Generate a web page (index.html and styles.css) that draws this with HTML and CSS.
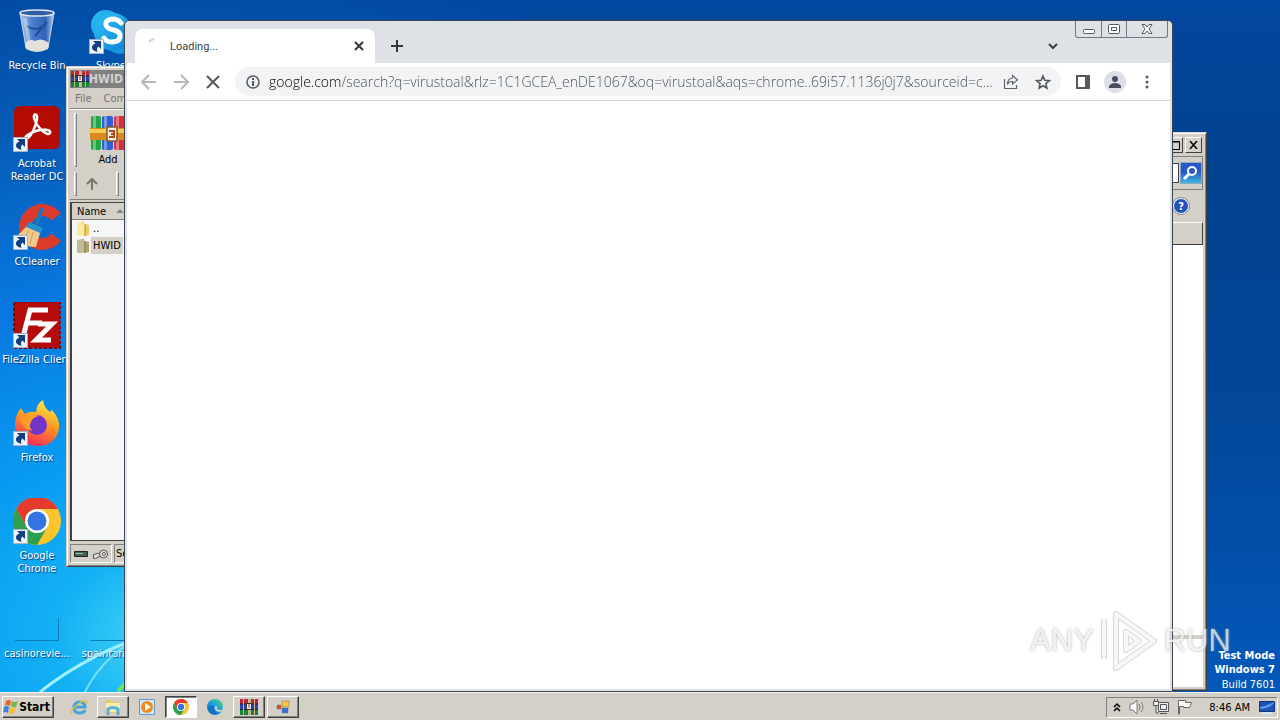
FILE: index.html
```html
<!DOCTYPE html>
<html lang="en">
<head>
<meta charset="utf-8">
<title>Desktop</title>
<link rel="stylesheet" href="styles.css">
</head>
<body>
<svg class="defs" aria-hidden="true">
  <defs>
    <linearGradient id="fire" x1="0.7" y1="0" x2="0.3" y2="1"><stop offset="0" stop-color="#fff04a"/><stop offset=".45" stop-color="#ff9a1f"/><stop offset="1" stop-color="#f5245f"/></linearGradient>
    <linearGradient id="sea" x1="0" y1="1" x2="1" y2="0"><stop offset="0" stop-color="#0b57b8"/><stop offset=".5" stop-color="#1b9de0"/><stop offset="1" stop-color="#5bd66b"/></linearGradient>
    <linearGradient id="glass" x1="0" x2="1"><stop offset="0" stop-color="#a9c4e6"/><stop offset=".35" stop-color="#4a7fd0"/><stop offset=".75" stop-color="#2e62b8"/><stop offset="1" stop-color="#b8cfe9"/></linearGradient>
    <linearGradient id="sky" x1="0" y1="0" x2="1" y2="1"><stop offset="0" stop-color="#2fc3f5"/><stop offset="1" stop-color="#0a7fd6"/></linearGradient>
  </defs>
  <symbol id="shortcut" viewBox="0 0 15 15"><path fill="#eef3f8" stroke="#9fb4c9" d="M.5.5h14v14H.5z"/><path fill="#123f82" d="M4 2h8v8L9.500 7.500Q7 9 8.500 13 2 11 3 7.500 4 5 6.500 4.500z"/></symbol>
  <symbol id="chrome" viewBox="0 0 48 48"><circle cx="24" cy="24" r="24" fill="#fbc52c"/><path fill="#e33b2e" d="M3.200 12A24 24 0 0 1 44.800 12H24L13.600 30z"/><path fill="#2f9e4f" d="M3.200 12A24 24 0 0 0 24 48L34.400 30H13.600z"/><circle cx="24" cy="24" r="12" fill="#fff"/><circle cx="24" cy="24" r="9.500" fill="#3374e0"/></symbol>
  <symbol id="rar" viewBox="0 0 36 36"><rect x="1" y="1" width="10" height="34" rx="2" fill="#24a444"/><rect x="12" y="1" width="11" height="34" rx="2" fill="#2b60d8"/><rect x="24" y="1" width="11" height="34" rx="2" fill="#d72f3c"/><path fill="#fff" opacity=".35" d="M3 1h3v34H3zM14 1h3v34h-3zM26 1h3v34h-3z"/><path fill="#d98a1f" d="M0 13h36v12H0z"/><path fill="#f6ca58" d="M0 14h36v4H0z"/><path fill="#f7eee0" stroke="#80592a" stroke-width="1.500" d="M17 12h10v14H17z"/><path fill="none" stroke="#b4471b" stroke-width="2" d="M19 16h5v6h-5M21 19h3"/></symbol>
  <symbol id="rar-small" viewBox="0 0 18 16"><path fill="#b8283a" d="M0 0h18v5H0z"/><path fill="#2c43b4" d="M0 5h18v5H0z"/><path fill="#17823a" d="M0 10h18v6H0z"/><path stroke="#222" d="M0 5h18M0 10.500h18"/><path fill="#c9b48a" d="M3 0h1v16H3zM14 0h1v16h-1zM8 0h3v16H8z"/><path fill="#eee" stroke="#333" d="M6.500 4.500h5v6h-5z"/><path stroke="#a33" d="M9 5v4"/></symbol>
  <symbol id="folder" viewBox="0 0 16 16"><path fill="#e9c04e" d="M2 2l7-1v14l-7-1z"/><path fill="#fbeaa0" d="M2 2h5l3 1v12H2z"/><path fill="#eccb62" d="M10 3l4 1v10l-4 1z"/><path stroke="#b18d30" fill="none" d="M10 3v12"/></symbol>
</svg>

<main class="desktop">
  <svg class="rays" viewBox="0 0 300 120" aria-hidden="true"><path d="M40 115Q90 75 160 54" stroke="#9ff0fb" stroke-width="3"/><path d="M85 115Q105 75 150 55" stroke="#70dffa" stroke-width="2"/><path d="M118 114l14-14" stroke="#68e66c" stroke-width="4"/></svg>

  <nav class="icons" aria-label="Desktop icons">
    <a class="shortcut" href="#"><svg viewBox="0 0 48 48"><path fill="url(#glass)" stroke="#c4d4e8" d="M7 5l6 35q11 7 22 0l6-35z"/><ellipse cx="24" cy="5" rx="17" ry="3" fill="#2d5da8" stroke="#dfe6ee" stroke-width="1.500"/><path fill="#e3e1dc" d="M12 35q5-5 10-2 7-4 14 2l-1 6q-11 5-22 0z"/><path stroke="#244e98" stroke-width="2" fill="none" d="M14 18q8 6 16 0M34 14L22 28"/><path stroke="#fff" opacity=".35" stroke-width="4" d="M12 10l4 24"/></svg><span>Recycle Bin</span></a>
    <a class="shortcut" href="#"><svg viewBox="0 0 48 48"><rect x="1" y="0" width="46" height="43" rx="6" fill="#b30b00"/><path fill="none" stroke="#fff" stroke-width="2.500" d="M13 33C10 31 17 27 23 25S39 23 37 27 24 22 21 12c-1-5 4-5 3 1s-5 18-11 20z"/><use href="#shortcut" x="0" y="31" width="15" height="15"/></svg><span>Acrobat<br>Reader DC</span></a>
    <a class="shortcut" href="#"><svg viewBox="0 0 48 48"><path fill="none" stroke="#dc3b2c" stroke-width="12" d="M43 13A17 17 0 1 0 43 33"/><path stroke="#1878bd" stroke-width="4" d="M29 4l-6 18"/><path fill="#2791cf" d="M16 18l14 6-3 7-15-7z"/><path fill="#f0c98b" d="M13 23l14 6-4 14-11-1-8-10z"/><path stroke="#d6a058" d="M16 26l-6 11M20 28l-3 12"/><use href="#shortcut" x="0" y="31" width="15" height="15"/></svg><span>CCleaner</span></a>
    <a class="shortcut" href="#"><svg viewBox="0 0 48 48"><rect x="1" y="0" width="46" height="46" fill="#b50b0b" stroke="#7c0707" stroke-width="2" stroke-dasharray="3 2"/><path fill="none" stroke="#fff" stroke-width="5" d="M10 35L17 8h18M14 21h15M25 22h14L23 38h15"/><use href="#shortcut" x="0" y="31" width="15" height="15"/></svg><span class="nowrap">FileZilla Client</span></a>
    <a class="shortcut" href="#"><svg viewBox="0 0 48 48"><path fill="url(#fire)" d="M8 8l4 6q5-3 10-2l1 0q1-9 7-12 1 8 7 12l2-2q8 9 7 18-3 18-22 18Q2 44 2 26 2 15 8 8z"/><circle cx="24" cy="25" r="10" fill="#7136c9"/><path fill="#ff9c25" d="M8 18q10-6 18-2-6 1-8 6-3 6 2 9-12-2-12-13z"/><use href="#shortcut" x="0" y="31" width="15" height="15"/></svg><span>Firefox</span></a>
    <a class="shortcut" href="#"><svg viewBox="0 0 48 48"><use href="#chrome" y="-1" width="48" height="48"/><use href="#shortcut" x="0" y="31" width="15" height="15"/></svg><span>Google<br>Chrome</span></a>
    <a class="shortcut" href="#"><svg viewBox="0 0 48 48"><path fill="none" stroke="#087ab8" d="M2 44.500h43.500V22"/></svg><span class="nowrap">casinorevie...</span></a>
    <a class="shortcut first-row" href="#"><svg viewBox="0 0 48 48"><circle cx="19" cy="17" r="15" fill="url(#sky)"/><circle cx="33" cy="31" r="15" fill="#1597dd"/><circle cx="26" cy="24" r="19" fill="url(#sky)"/><path fill="none" stroke="#fff" stroke-width="5" stroke-linecap="round" d="M34 15q-3-4-9-4-7 1-6 6 1 4 8 5 7 2 6 7-1 5-8 5-6 0-8-4"/><use href="#shortcut" x="2" y="31" width="15" height="15"/></svg><span>Skype</span></a>
    <a class="shortcut last-row" href="#"><svg viewBox="0 0 48 48"><path fill="none" stroke="#087ab8" d="M4 44.500h41.500V22"/></svg><span class="nowrap">spainrang...</span></a>
  </nav>

  <section class="classic archive" aria-label="HWID archive">
    <header class="titlebar"><svg width="18" height="16"><use href="#rar-small"/></svg>HWID</header>
    <div class="menubar"><span>File</span><span>Commands</span></div>
    <div class="tools">
      <i class="grip"></i>
      <button class="tool"><svg width="36" height="36"><use href="#rar"/></svg>Add</button>
    </div>
    <div class="tools path">
      <i class="grip"></i>
      <button class="up" aria-label="Up"><svg width="12" height="12" fill="none" stroke="#77756f" stroke-width="2"><path d="M6 12V2M1 6l5-5 5 5"/></svg></button>
      <i class="grip"></i>
    </div>
    <div class="list">
      <div class="head">Name <svg width="8" height="4"><path fill="#888" d="M0 4l4-4 4 4z"/></svg></div>
      <div class="row"><svg width="16" height="16"><use href="#folder"/></svg><span>..</span></div>
      <div class="row dim"><svg width="16" height="16"><use href="#folder"/></svg><span class="picked">HWID</span></div>
    </div>
    <footer class="status">
      <span class="cell"><svg width="36" height="12"><path fill="#48605a" stroke="#222" d="M1.500 3.500h13v5h-13z"/><path stroke="#8fc4ad" d="M3 5.500h7"/><path fill="#ddd" stroke="#555" d="M20.500 6.500l8-2v3l-6 3h-2z"/><circle cx="30.500" cy="6" r="4" fill="#ddd" stroke="#555"/><circle cx="31" cy="6" r="1.500" fill="#fff" stroke="#555"/></svg></span>
      <span class="cell fill">Selected 1 folder</span>
    </footer>
  </section>

  <section class="classic explorer" aria-label="Explorer window">
    <header class="caption">
      <button class="box" aria-label="Maximize"><svg width="10" height="9" fill="none" stroke="#000"><path d="M.500 1h9M.500.500h9v8h-9z"/></svg></button>
      <button class="box" aria-label="Close"><svg width="9" height="8" stroke="#000" stroke-width="1.500"><path d="M1 0l7 8M8 0L1 8"/></svg></button>
    </header>
    <div class="searchrow"><input class="find" type="text" aria-label="Search"><button class="go" aria-label="Search"><svg width="20" height="20" fill="none" stroke="#fff"><circle cx="11" cy="8" r="4" stroke-width="2"/><path stroke-width="3" d="M8 11l-5 5"/></svg></button></div>
    <div class="helprow"><button class="help" aria-label="Help">?</button></div>
    <div class="band"></div>
    <div class="blank"><i></i></div>
  </section>

  <div class="edition"><b>Test Mode</b><b>Windows 7</b><span>Build 7601</span></div>

  <section class="browser" aria-label="Browser">
    <header class="strip">
      <div class="tab">
        <svg width="16" height="16" fill="none" stroke="#c9cdf0" stroke-width="2"><path d="M3 4q2-2.500 5-3"/></svg>
        <span>Loading...</span>
        <button aria-label="Close tab"><svg width="10" height="10" stroke="#33363a" stroke-width="2"><path d="M1 1l8 8M9 1L1 9"/></svg></button>
      </div>
      <button class="plus" aria-label="New tab"><svg width="12" height="12" stroke="#33363a" stroke-width="2"><path d="M6 0v12M0 6h12"/></svg></button>
      <button class="tabs-menu" aria-label="Search tabs"><svg width="10" height="7" fill="none" stroke="#3c4043" stroke-width="2"><path d="M1 1l4 4 4-4"/></svg></button>
      <div class="controls">
        <button aria-label="Minimize"><svg width="12" height="10" fill="#fff" stroke="#555a63"><rect x=".500" y="5.500" width="11" height="4" rx="1"/></svg></button>
        <button aria-label="Maximize"><svg width="12" height="10" fill="#fff" stroke="#555a63"><rect x=".500" y=".500" width="11" height="9" rx="1"/><path d="M3.500 3.500h5v3h-5z"/></svg></button>
        <button class="wide" aria-label="Close"><svg width="12" height="10"><path fill="#fff" stroke="#555a63" d="M1 .500h3l2 2.500 2-2.500h3L8 5l3 4.500H8L6 7 4 9.500H1L4 5z"/></svg></button>
      </div>
    </header>
    <div class="toolbar">
      <button class="icon" aria-label="Back"><svg width="16" height="16" fill="none" stroke="#b6b8bb" stroke-width="2"><path d="M15 8H2M8 1L1 8l7 7"/></svg></button>
      <button class="icon" aria-label="Forward"><svg width="16" height="16" fill="none" stroke="#b6b8bb" stroke-width="2"><path d="M1 8h13M8 1l7 7-7 7"/></svg></button>
      <button class="icon" aria-label="Stop"><svg width="14" height="14" fill="none" stroke="#55585c" stroke-width="2"><path d="M1 1l12 12M13 1L1 13"/></svg></button>
      <div class="omnibox">
        <svg width="14" height="14" fill="none" stroke="#55585c"><circle cx="7" cy="7" r="6" stroke-width="1.500"/><path stroke-width="2" d="M7 6v5M7 3v2"/></svg>
        <input class="url" type="text" aria-label="Address" value="google.com/search?q=virustoal&amp;rlz=1C1GCEA_enDE1067&amp;oq=virustoal&amp;aqs=chrome..69i57.1136j0j7&amp;sourceid=c...">
        <button class="icon" aria-label="Share"><svg width="16" height="16" fill="none" stroke="#5f6368" stroke-width="1.200"><path d="M1.500 5v9.500h12V11M9.500 1.500l5 4.500-5 4V7.500q-4 0-5 3 0-6 5-6.500z"/></svg></button>
        <button class="icon" aria-label="Bookmark"><svg width="16" height="16" fill="none" stroke="#55585c" stroke-width="1.600"><path d="M8 2l1.800 4.200 4.500.400-3.400 3 1 4.400L8 11.700 4.100 14l1-4.400-3.400-3 4.500-.400z"/></svg></button>
      </div>
      <button class="icon" aria-label="Side panel"><svg width="14" height="14"><path fill="#55585c" fill-rule="evenodd" d="M0 0h14v14H0zM2 2v10h7V2z"/></svg></button>
      <button class="icon" aria-label="Profile"><svg width="22" height="22"><circle cx="11" cy="11" r="11" fill="#dcdfe5"/><circle cx="11" cy="8" r="3" fill="#454d5e"/><path fill="#454d5e" d="M5 17v-2q2-3 6-3t6 3v2z"/></svg></button>
      <button class="icon" aria-label="Menu"><svg width="4" height="14" fill="#55585c"><circle cx="2" cy="2" r="1.500"/><circle cx="2" cy="7" r="1.500"/><circle cx="2" cy="12" r="1.500"/></svg></button>
    </div>
    <div class="page"></div>
  </section>

  <div class="watermark"><span>ANY</span><svg width="58" height="66" fill="none" stroke-linejoin="round"><path stroke="#cfcfcf" stroke-width="6" d="M4 11v40M16 55V6l38 27-38 27v-10M26 24v18l13-9z"/><path stroke="#f6f6f6" stroke-width="4" d="M4 11v40M16 55V6l38 27-38 27v-10M26 24v18l13-9z"/></svg><span>RUN</span></div>
</main>

<footer class="taskbar">
  <button class="start"><svg width="16" height="16"><path fill="#e8642c" d="M3 2q3-2 5 0L7 7q-3-2-5 0z"/><path fill="#7ab648" d="M9 2q3 2 6 0l-2 6q-3 1-5-1z"/><path fill="#4482d6" d="M1 8q3-2 5 0l-1 6q-3-2-5 0z"/><path fill="#f2bf33" d="M7 8q3 2 6 1l-2 5q-3 2-5 0z"/></svg>Start</button>
  <nav class="apps" aria-label="Task buttons">
    <button aria-label="Internet Explorer"><svg width="18" height="18" fill="none"><path stroke="#40a4df" stroke-width="3" d="M5 9h10q0-5-5-5-6 0-6 6 0 5 6 5 4 0 5-3"/><path stroke="#ecc039" stroke-width="1.500" d="M2 16q-3-3 5-9 7-6 10-4 1 1-1 3"/></svg></button>
    <button class="raised" aria-label="File Explorer"><svg width="18" height="18"><path fill="#e7ca67" d="M1 2h6l1 2h8v11H1z"/><path fill="#faedac" d="M2 5h14v9H2z"/><path fill="none" stroke="#56aee0" stroke-width="3" d="M4 17v-6q5-3 10 0v6"/></svg></button>
    <button aria-label="Media Player"><svg width="16" height="16"><path fill="#d3e8f7" stroke="#6399c8" d="M.500.500h15v15H.500z"/><circle cx="8" cy="8" r="6" fill="#f28b1f"/><path fill="#fff" d="M6 4l6 4-6 4z"/></svg></button>
    <button class="pressed" aria-label="Google Chrome"><svg width="16" height="16"><use href="#chrome"/></svg></button>
    <button aria-label="Edge"><svg width="16" height="16"><circle cx="8" cy="8" r="8" fill="url(#sea)"/><path fill="#d4d0c8" d="M8 7q3 0 2 3 3 2 6 0-1 3-4 3-5-1-4-6z"/><path fill="#1470c4" d="M1 9q3-4 6-2-2 6 5 7-7 4-11-5z"/></svg></button>
    <button class="raised" aria-label="WinRAR"><svg width="18" height="16"><use href="#rar-small"/></svg></button>
    <button class="raised" aria-label="Application"><svg width="14" height="14" stroke="#777" stroke-width=".500"><path fill="#e04a2d" d="M1 5h4v4H1z"/><path fill="#f6c83d" d="M6 1h7v6H6z"/><path fill="#3a6fdc" d="M6 8h6v5H6z"/></svg></button>
  </nav>
  <div class="tray">
    <svg width="8" height="11" fill="none" stroke="#000" stroke-width="1.500"><path d="M1 5l3-3 3 3M1 9l3-3 3 3"/></svg>
    <svg width="16" height="16" fill="#fff" stroke="#777"><path d="M1 5h3l4-4v14l-4-4H1z"/><path fill="none" d="M10 5q2 3 0 6M12 3q4 5 0 10"/></svg>
    <svg width="16" height="16" fill="#eee" stroke="#555"><path d="M5.500 3.500h10v9h-10zM7.500 5.500h6v5h-6zM7 14.500h7M.500 2.500h5v4h-5zM1.500 0v3M4.500 0v3M3 7v7h3"/></svg>
    <svg width="16" height="16" fill="#fff" stroke="#666"><path d="M1.500 15V1.500h7v2h6l-2 5h-6v-1h-4V15z"/></svg>
    <time>8:46 AM</time>
    <svg width="16" height="13"><path fill="#1d52b8" stroke="#16346e" d="M.500.500h15v10H.500z"/><path fill="#5e9be8" d="M1 6q7-1 14-5v1q-4 5-14 6z"/><path fill="#d5e5f7" d="M3 11h10v2H3z"/></svg>
  </div>
</footer>
</body>
</html>
```

FILE: styles.css
```css
* { box-sizing: border-box; }
body {
  margin: 0;
  height: 100vh;
  display: flex;
  flex-direction: column;
  overflow: hidden;
  font: 11px/13px "DejaVu Sans Condensed", "DejaVu Sans", sans-serif;
  color: #000;
}
button, input { font: inherit; color: inherit; border: 0; padding: 0; margin: 0; background: none; }
button { display: flex; align-items: center; justify-content: center; }
svg { display: block; flex: none; }
.defs { position: absolute; width: 0; height: 0; }

.desktop {
  position: relative;
  flex: 1;
  overflow: hidden;
  background:
    radial-gradient(ellipse 900px 680px at 180px 640px, #4fdcf2 0, #12b0f5 14%, #089af0 30%, #0878e0 52%, rgba(6, 90, 200, 0) 100%),
    linear-gradient(to bottom, #0247a0 0, #02428e 25%, #02479a 60%, #0258ba 100%);
}
.rays { position: absolute; left: 0; bottom: -5px; width: 300px; height: 120px; fill: none; }
.icons {
  display: grid;
  grid-auto-flow: column;
  grid-template-rows: repeat(7, 98px);
  grid-auto-columns: 72px;
  justify-content: start;
  column-gap: 2px;
  padding: 8px 0 0 1px;
}
.shortcut {
  display: flex;
  flex-direction: column;
  align-items: center;
  gap: 3px;
  color: #fff;
  text-align: center;
  text-decoration: none;
  text-shadow: 1px 1px 1px #003a80;
}
.shortcut svg { width: 48px; height: 48px; }
.nowrap { white-space: nowrap; }
.first-row { grid-row: 1; grid-column: 2; }
.last-row { grid-row: 7; grid-column: 2; }

.classic {
  position: absolute;
  display: flex;
  flex-direction: column;
  background: #d4d0c8;
  border: 1px solid;
  border-color: #d4d0c8 #404040 #404040 #d4d0c8;
  box-shadow: inset 1px 1px #fff, inset -1px -1px #808080;
  padding: 3px;
}
.archive { left: 66px; top: 66px; width: 50%; height: 501px; }
.titlebar { display: flex; align-items: center; height: 18px; padding-left: 1px; background: #808080; color: #d4d0c8; font-weight: bold; font-size: 12px; }
.menubar { display: flex; gap: 12px; padding: 4px 5px; height: 20px; color: #77756f; }
.tools { display: flex; height: 62px; border-top: 1px solid #808080; box-shadow: inset 0 1px #fff; padding: 4px 4px 3px; gap: 13px; }
.tools.path { height: 30px; padding-top: 2px; border-top: 0; border-bottom: 1px solid #808080; box-shadow: none; gap: 9px; }
.grip { width: 3px; border: 1px solid; border-color: #fff #808080 #808080 #fff; }
.tool { flex-direction: column; gap: 2px; }
.up { width: 12px; }
.up + .grip { margin-left: 9px; }
.list { flex: 1; margin-top: 2px; border: 1px solid #404040; border-left-width: 2px; background: #f6f6f6; }
.head { display: flex; align-items: center; gap: 10px; height: 17px; padding-left: 5px; background: #d4d0c8; border-bottom: 1px solid #808080; }
.row { display: flex; align-items: center; height: 17px; padding-left: 3px; }
.row span { padding: 2px; }
.picked { background: #d4d0c8; }
.dim svg { filter: brightness(.8) saturate(.6); }
.status { display: flex; gap: 2px; padding-top: 3px; height: 22px; }
.cell { display: flex; align-items: center; padding: 0 2px; border: 1px solid; border-color: #808080 #fff #fff #808080; }
.fill { flex: 1; padding: 0 1px; }

.explorer { right: 73px; top: 132px; bottom: 1px; width: 55%; }
.caption { display: flex; justify-content: flex-end; gap: 2px; height: 20px; padding: 1px 1px 3px; }
.box { width: 17px; height: 16px; background: #d4d0c8; border: 1px solid; border-color: #fff #404040 #404040 #fff; }
.searchrow { display: flex; height: 34px; padding: 6px 1px; gap: 2px; border: 1px solid #808080; border-left: 0; align-items: stretch; }
.find { flex: 1; background: #fff; border: 1px solid #404040; }
.go { width: 20px; background: linear-gradient(#2858c8 45%, #3db8df); box-shadow: 0 0 0 1px #8fa9c4; }
.helprow { display: flex; justify-content: flex-end; align-items: center; height: 32px; padding-right: 14px; }
.help { width: 16px; height: 16px; border-radius: 50%; background: #2352b8; border: 1px solid #fff; outline: 1px solid #7b8cad; color: #fff; font-weight: bold; }
.band { height: 23px; border: 1px solid; border-color: #fff #404040 #404040 #fff; }
.blank { flex: 1; background: #fff; display: flex; align-items: flex-end; }
.blank i { flex: 1; height: 4px; margin-bottom: 48px; background: #d4d0c8; }

.edition {
  position: absolute;
  right: 5px;
  bottom: 0;
  display: flex;
  flex-direction: column;
  align-items: flex-end;
  color: #fff;
  line-height: 14px;
}
.edition span { line-height: 15px; }

.browser {
  position: absolute;
  inset: 20px 107px 0 124px;
  display: flex;
  flex-direction: column;
  background: #dee1e6;
  border: 1px solid #3c4650;
  border-radius: 5px 5px 0 0;
  padding: 0 2px 2px;
}
.strip { display: flex; align-items: flex-start; height: 42px; padding-left: 8px; }
.tab {
  display: flex;
  align-items: center;
  align-self: flex-end;
  width: 240px;
  height: 34px;
  padding: 0 11px;
  gap: 8px;
  background: #fff;
  border-radius: 8px 8px 0 0;
  font-family: Roboto, sans-serif;
  color: #3c4043;
}
.tab span { flex: 1; }
.plus { width: 28px; height: 28px; margin: 11px 0 0 8px; }
.tabs-menu { width: 28px; height: 28px; margin: 11px 8px 0 auto; }
.controls { display: flex; height: 17px; margin-right: 2px; border: 1px solid #737983; border-top: 0; border-radius: 0 0 3px 3px; }
.controls button { width: 25px; }
.controls button + button { border-left: 1px solid #737983; }
.controls .wide { width: 41px; }
.toolbar { display: flex; align-items: center; height: 38px; padding: 0 7px 0 6px; background: #fff; border-bottom: 1px solid #d5d7da; }
.icon { width: 32px; height: 28px; flex: none; }
.omnibox { flex: 1; display: flex; align-items: center; height: 29px; margin: 0 6px; padding: 0 2px 0 11px; border-radius: 15px; background: #f1f3f4; }
.url {
  flex: 1;
  min-width: 0;
  margin-left: 9px;
  font: 300 14px/20px "Open Sans", "Noto Sans", sans-serif;
  color: transparent;
  background: linear-gradient(90deg, #000 72px, #4a4e53 72px);
  -webkit-background-clip: text;
  background-clip: text;
}
.page { flex: 1; background: #fff; }

.watermark {
  position: absolute;
  right: 49px;
  bottom: 18px;
  display: flex;
  align-items: center;
  gap: 6px;
  font: 31px/44px "Liberation Sans", sans-serif;
  color: #f1f1f1;
  text-shadow: 0 0 3px #999;
  opacity: .8;
}

.taskbar {
  display: flex;
  align-items: center;
  height: 28px;
  padding: 1px 2px 0;
  background: #d4d0c8;
  border-top: 1px solid #f6f5f2;
}
.start, .raised, .pressed { border: 1px solid; border-color: #fff #404040 #404040 #fff; box-shadow: inset -1px -1px #808080; }
.start { width: 52px; height: 22px; padding-right: 3px; font-weight: bold; font-size: 12px; }
.apps { display: flex; gap: 2px; margin-left: 9px; }
.apps button { width: 32px; height: 22px; }
.apps .pressed { background: #fff; border-color: #404040 #fff #fff #404040; box-shadow: inset 1px 1px #808080; }
.tray {
  display: flex;
  align-items: center;
  gap: 8px;
  height: 21px;
  margin-left: auto;
  padding: 0 2px 0 6px;
  border: 1px solid;
  border-color: #808080 #fff #fff #808080;
}
.tray time { margin: 0 1px 0 8px; white-space: nowrap; }
```
